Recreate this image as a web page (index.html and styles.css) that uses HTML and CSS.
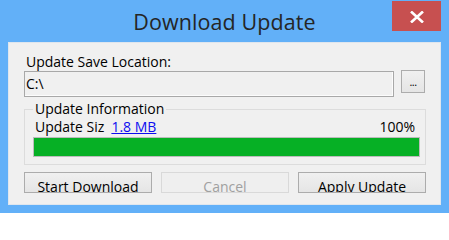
FILE: index.html
```html
<!DOCTYPE html>
<html>
<head>
<meta charset="utf-8">
<link rel="stylesheet" href="styles.css">
</head>
<body>
<div class="window">
  <div class="titlebar">
    <div class="spacer"></div>
    <div class="title">Download Update</div>
    <div class="close">
      <svg width="14" height="12" viewBox="0 0 14 12"><path d="M1 0.5 L13 11.5 M13 0.5 L1 11.5" stroke="#fff" stroke-width="2.6" fill="none"/></svg>
    </div>
  </div>
  <div class="client">
    <div class="label">Update Save Location:</div>
    <div class="path-row">
      <div class="textbox">C:\</div>
      <div class="browse">...</div>
    </div>
    <fieldset class="group">
      <legend class="legend">Update Information</legend>
      <div class="info-row">
        <span class="size-label">Update Siz</span>
        <a class="size-link" href="#">1.8 MB</a>
        <span class="percent">100%</span>
      </div>
      <div class="progress"><div class="progress-fill" style="width:100%"></div></div>
    </fieldset>
    <div class="buttons">
      <div class="btn">Start Download</div>
      <div class="btn disabled">Cancel</div>
      <div class="btn">Apply Update</div>
    </div>
  </div>
</div>
</body>
</html>
```

FILE: styles.css
```css
html, body {
  margin: 0;
  padding: 0;
}
body {
  width: 449px;
  height: 213px;
  overflow: hidden;
  font-family: "Open Sans", "Noto Sans", sans-serif;
}
.window {
  width: 449px;
  height: 213px;
  background: #62b0f8;
  box-sizing: border-box;
  display: flex;
  flex-direction: column;
}
.titlebar {
  height: 42px;
  display: grid;
  grid-template-columns: 1fr auto 1fr;
  align-items: start;
  padding-right: 8px;
  padding-left: 8px;
}
.title {
  font-size: 21.5px;
  line-height: 28px;
  color: #252525;
  padding-top: 8px;
  letter-spacing: 0.1px;
}
.close {
  justify-self: end;
  margin-top: 1px;
  width: 49px;
  height: 30px;
  background: #c75050;
  display: flex;
  align-items: center;
  justify-content: center;
}
.close svg { display: block; margin-top: 1px; }
.client {
  margin: 0 8px;
  height: 163px;
  background: #f0f0f0;
  box-sizing: border-box;
  border: 1px solid #dfe6ee;
  padding: 0 14px 0 15px;
  font-size: 14px;
  color: #000;
}
.label {
  margin-top: 10px;
  line-height: 18px;
  padding-left: 2px;
}
.path-row {
  display: flex;
  align-items: flex-start;
  gap: 7px;
}
.textbox {
  width: 370px;
  height: 26px;
  box-sizing: border-box;
  border: 1px solid #a8a8a8;
  box-shadow: inset -1px -1px 0 #fcfcfc;
  background: #f0f0f0;
  line-height: 23px;
  padding-left: 1px;
  font-size: 14px;
}
.browse {
  width: 24px;
  height: 23px;
  margin-top: -1px;
  box-sizing: border-box;
  border: 1px solid #acacac;
  background: linear-gradient(#f0f0f0, #e5e5e5);
  font-size: 11px;
  line-height: 12px;
  text-align: center;
  padding-top: 5px;
  letter-spacing: -0.5px;
}
.group {
  margin: 3px 0 0 0;
  padding: 0 5px 7px 8px;
  border: 1px solid #dcdcdc;
  width: 402px;
  box-sizing: border-box;
  min-width: 0;
}
.legend {
  margin-left: 0;
  padding: 0 2px;
  line-height: 18px;
  font-size: 14px;
}
.info-row {
  display: flex;
  align-items: baseline;
  line-height: 18px;
  height: 18px;
  padding-left: 2px;
}
.size-label { margin-right: 7px; }
.size-link {
  color: #0c0cf0;
  text-decoration: underline;
}
.percent {
  margin-left: auto;
  margin-right: 5px;
}
.progress {
  margin-top: 1px;
  height: 20px;
  box-sizing: border-box;
  border: 1px solid #bcbcbc;
  background: #e6e6e6;
}
.progress-fill {
  height: 100%;
  background: #06b025;
}
.buttons {
  margin-top: 7px;
  display: flex;
  gap: 9px;
}
.btn {
  width: 128px;
  height: 21px;
  box-sizing: border-box;
  border: 1px solid #acacac;
  background: linear-gradient(#f0f0f0, #e5e5e5);
  text-align: center;
  overflow: hidden;
  line-height: 18px;
  padding-top: 5px;
  font-size: 14px;
}
.btn.disabled {
  border-color: #d9d9d9;
  background: #efefef;
  color: #a0a0a0;
}
```
